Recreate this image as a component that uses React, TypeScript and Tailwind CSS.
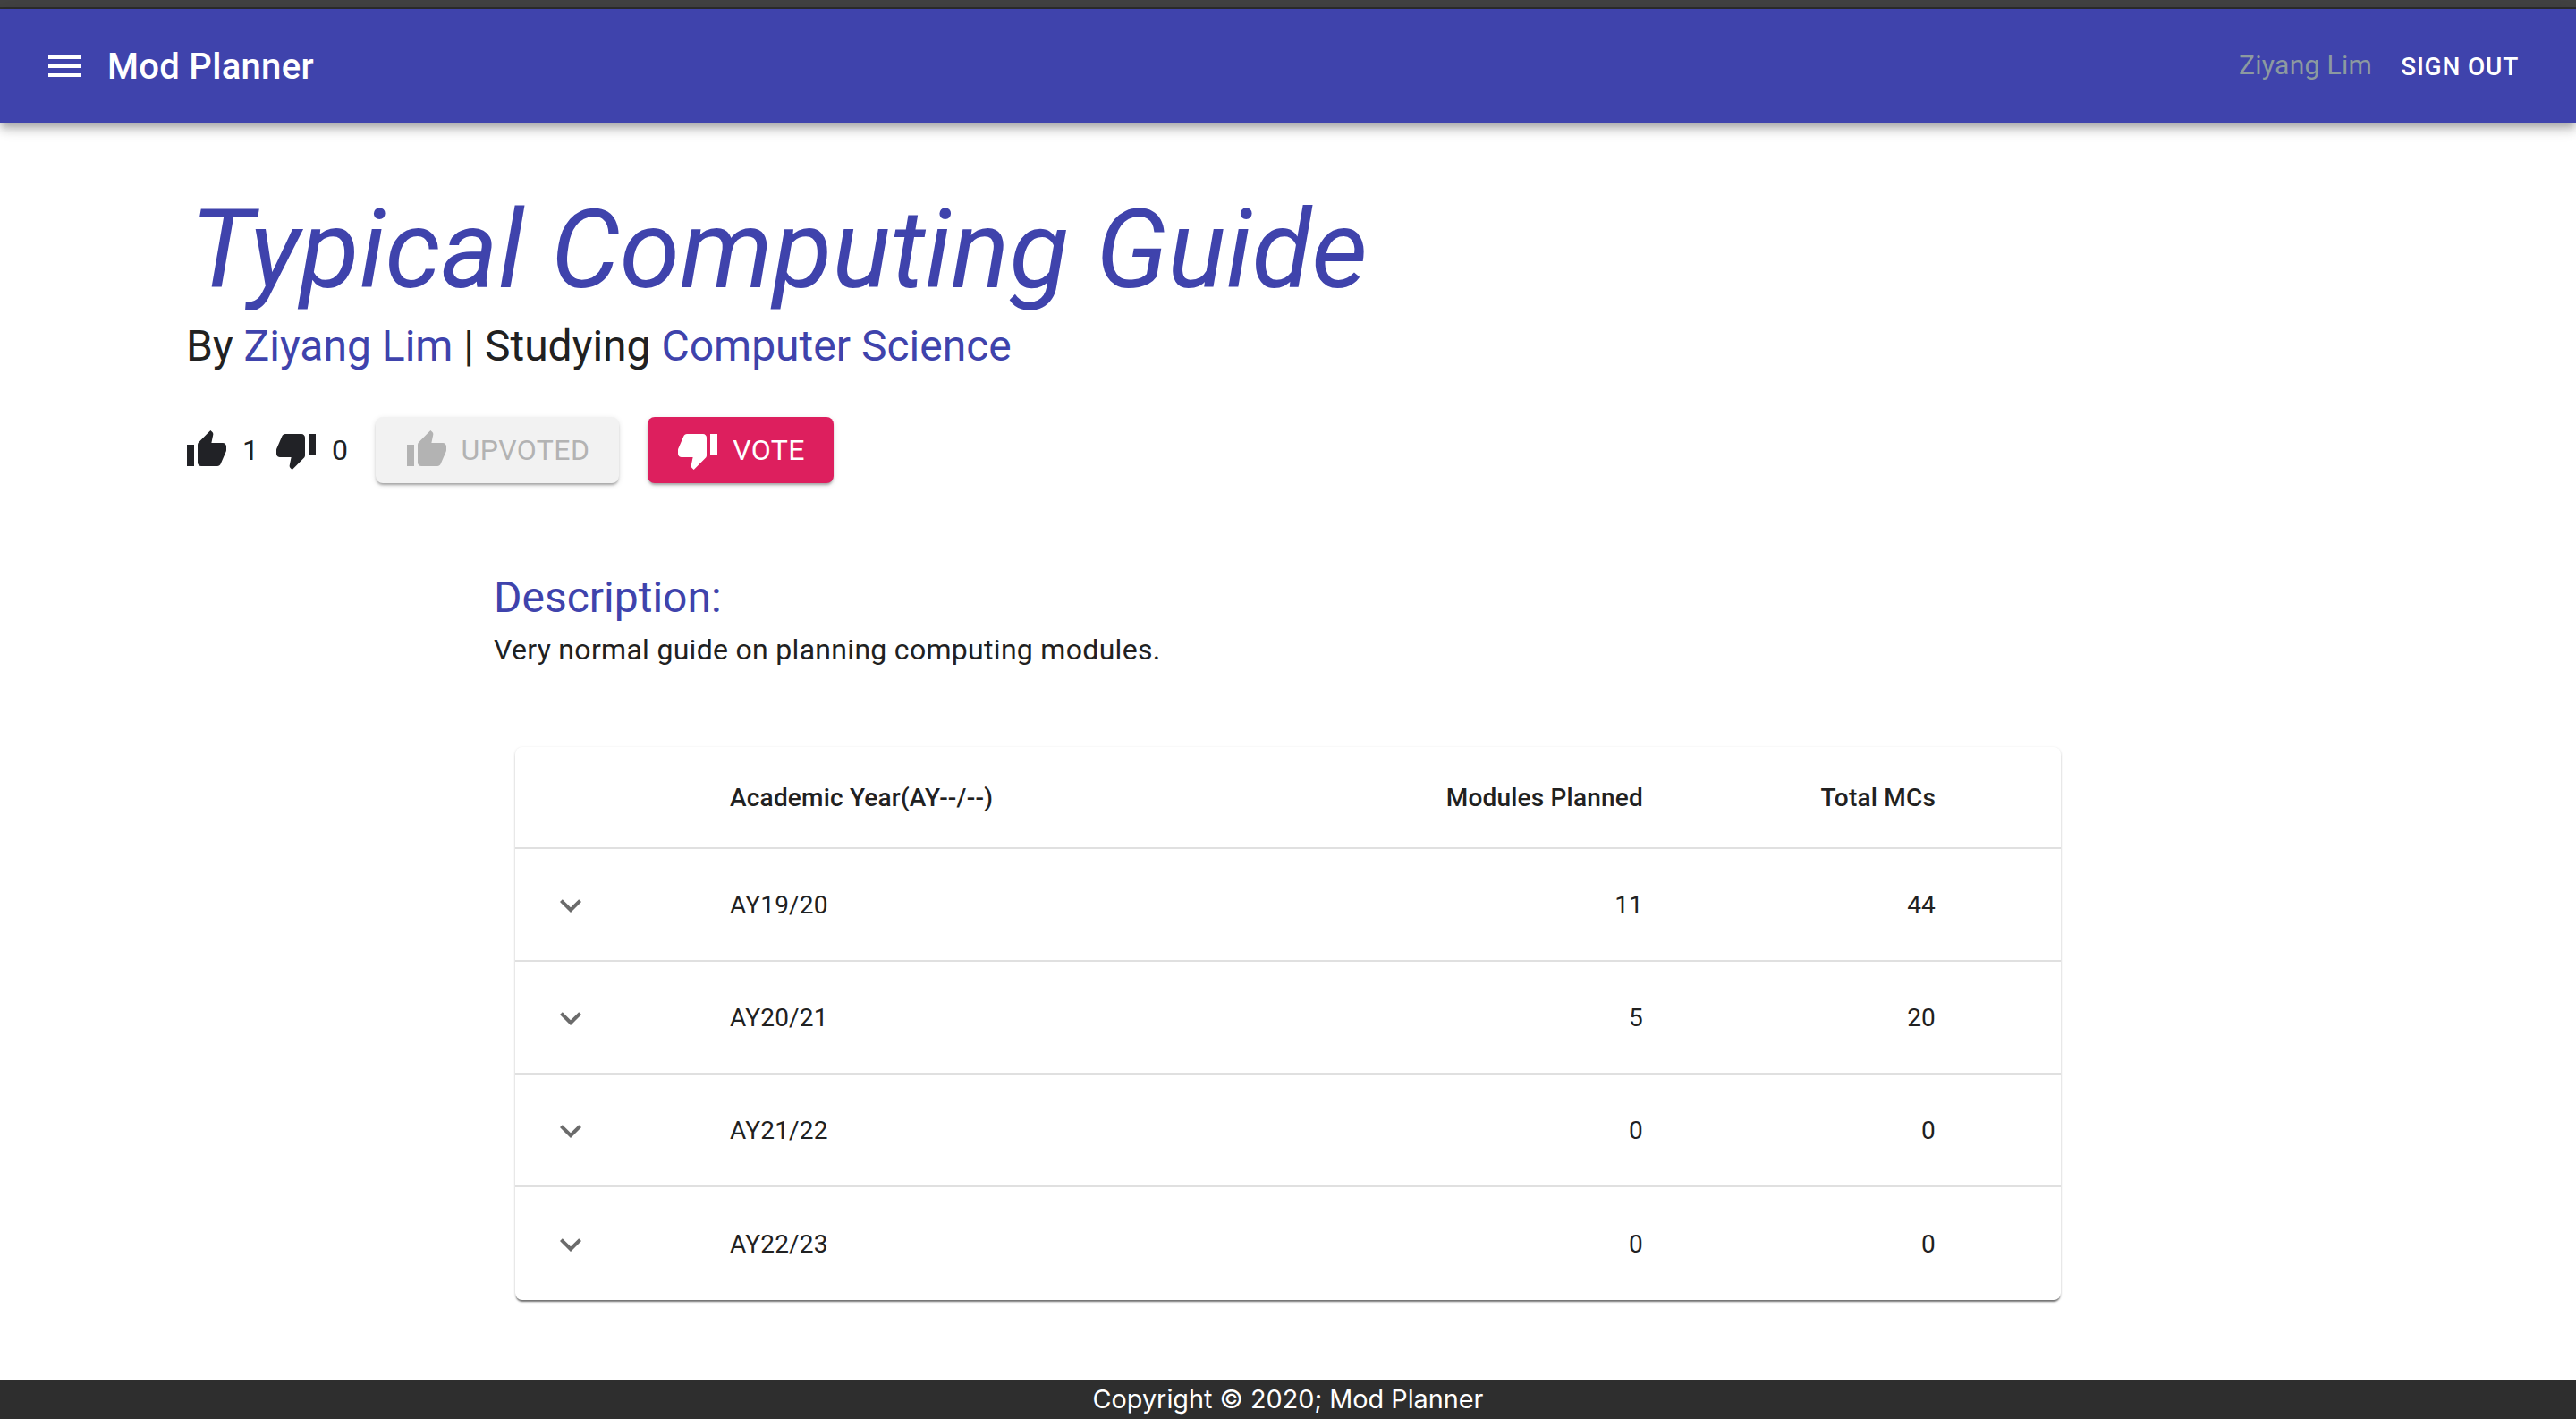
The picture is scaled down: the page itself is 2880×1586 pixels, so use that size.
const THUMB_UP = "M1 21h4V9H1v12zm22-11c0-1.1-.9-2-2-2h-6.31l.95-4.57.03-.32c0-.41-.17-.79-.44-1.06L14.17 1 7.59 7.59C7.22 7.95 7 8.45 7 9v10c0 1.1.9 2 2 2h9c.83 0 1.54-.5 1.84-1.22l3.02-7.05c.09-.23.14-.47.14-.73v-2z";
const THUMB_DOWN = "M15 3H6c-.83 0-1.54.5-1.84 1.22l-3.02 7.05c-.09.23-.14.47-.14.73v2c0 1.1.9 2 2 2h6.31l-.95 4.57-.03.32c0 .41.17.79.44 1.06L9.83 23l6.59-6.59c.36-.36.58-.86.58-1.41V5c0-1.1-.9-2-2-2zm4 0v12h4V3h-4z";
const CHEVRON = "M16.59 8.59L12 13.17 7.41 8.59 6 10l6 6 6-6z";
const MENU = "M3 18h18v-2H3v2zm0-5h18v-2H3v2zm0-7v2h18V6H3z";

const YEARS = [
  { label: "AY19/20", planned: 11, mcs: 44 },
  { label: "AY20/21", planned: 5, mcs: 20 },
  { label: "AY21/22", planned: 0, mcs: 0 },
  { label: "AY22/23", planned: 0, mcs: 0 },
];

function Icon({ d, className }: { d: string; className?: string }) {
  return (
    <svg viewBox="0 0 24 24" fill="currentColor" className={className}>
      <path d={d} />
    </svg>
  );
}

export default function App() {
  return (
    <div className="flex flex-col h-[1586px] bg-white text-[#212121] font-['Roboto',sans-serif] overflow-hidden">
      <div className="h-[10px] shrink-0 bg-[#424242] border-b-2 border-[#2e2e2e]" />

      {/* App bar */}
      <header className="relative z-10 h-[128px] shrink-0 flex items-center pl-[48px] pr-[48px] bg-[#3f43ac] text-white shadow-[0_4px_8px_-2px_rgba(0,0,0,0.2),0_8px_10px_0_rgba(0,0,0,0.14),0_2px_20px_0_rgba(0,0,0,0.12)]">
        <Icon d={MENU} className="w-[48px] h-[48px] shrink-0" />
        <h1 className="ml-[24px] mt-[2px] text-[40px] font-medium tracking-[0.3px]">Mod Planner</h1>
        <span className="ml-auto text-[30px] -mt-[4px] tracking-[0.3px] text-[#8c9aa0]">Ziyang Lim</span>
        <button className="ml-[32px] mr-[16px] mt-[2px] text-[28px] font-medium tracking-[0.8px]">SIGN OUT</button>
      </header>

      <main className="flex-1 min-h-0">
        <div className="pl-[209px] pt-[70px]">
          <h2 className="ml-[4px] h-[144px] text-[122px] leading-[144px] italic text-[#3f43ac]">Typical Computing Guide</h2>
          <p className="text-[48px] leading-[1.334] mt-[3px] -ml-[1px]">
            By <span className="text-[#3f43ac]">Ziyang Lim</span> | Studying <span className="text-[#3f43ac]">Computer Science</span>
          </p>

          <div className="flex items-center mt-[47px] text-[32px]">
            <Icon d={THUMB_UP} className="w-[48px] h-[48px] -ml-[2px] text-[#212226]" />
            <span className="ml-[16px]">1</span>
            <Icon d={THUMB_DOWN} className="w-[48px] h-[48px] ml-[18px] text-[#212226]" />
            <span className="ml-[16px]">0</span>
            <button className="ml-[31px] h-[74px] w-[272px] flex items-center justify-center gap-[15px] rounded-[8px] bg-[#f2f2f2] text-[#b3b3b3] shadow-[0_3px_3px_-1px_rgba(0,0,0,0.3),0_2px_6px_0_rgba(0,0,0,0.12)]">
              <Icon d={THUMB_UP} className="w-[48px] h-[48px]" />
              <span className="tracking-[0.4px]">UPVOTED</span>
            </button>
            <button className="ml-[32px] h-[74px] w-[208px] flex items-center justify-center gap-[15px] rounded-[8px] bg-[#dd1f5e] text-white shadow-[0_3px_3px_-1px_rgba(0,0,0,0.3),0_2px_6px_0_rgba(0,0,0,0.12)]">
              <Icon d={THUMB_DOWN} className="w-[48px] h-[48px]" />
              <span className="tracking-[0.4px]">VOTE</span>
            </button>
          </div>
        </div>

        <section className="pl-[552px] mt-[96px]">
          <h3 className="text-[48px] leading-[1.334] text-[#3f43ac]">Description:</h3>
          <p className="mt-[2px] text-[32px] leading-[1.5] tracking-[0.3px]">Very normal guide on planning computing modules.</p>
        </section>

        {/* Year table */}
        <div className="mx-auto mt-[85px] w-[1728px] rounded-[8px] bg-white shadow-[0_3px_2px_-1px_rgba(0,0,0,0.5),0_1px_3px_0_rgba(0,0,0,0.18)]">
          <div className="grid grid-cols-[240px_694px_327px_327px_140px] items-center h-[114px] pt-[2px] text-[28px] font-medium tracking-[0.2px] border-b-2 border-[#e0e0e0]">
            <span />
            <span>Academic Year(AY--/--)</span>
            <span className="text-right">Modules Planned</span>
            <span className="text-right">Total MCs</span>
            <span />
          </div>
          {YEARS.map((y, i) => (
            <div key={y.label} className={`grid grid-cols-[240px_694px_327px_327px_140px] items-center h-[126px] pt-[2px] text-[28px] tracking-[0.2px] ${i < YEARS.length - 1 ? "border-b-2 border-[#e0e0e0]" : ""}`}>
              <span className="pl-[38px]"><Icon d={CHEVRON} className="w-[48px] h-[48px] text-[#6b6b6b]" /></span>
              <span>{y.label}</span>
              <span className="text-right">{y.planned}</span>
              <span className="text-right">{y.mcs}</span>
              <span />
            </div>
          ))}
        </div>
      </main>

      <footer className="h-[44px] shrink-0 bg-[#2e2e2e] text-white text-[28.8px] leading-[44px] text-center font-['Inter',sans-serif]">
        Copyright © 2020; Mod Planner
      </footer>
    </div>
  );
}
